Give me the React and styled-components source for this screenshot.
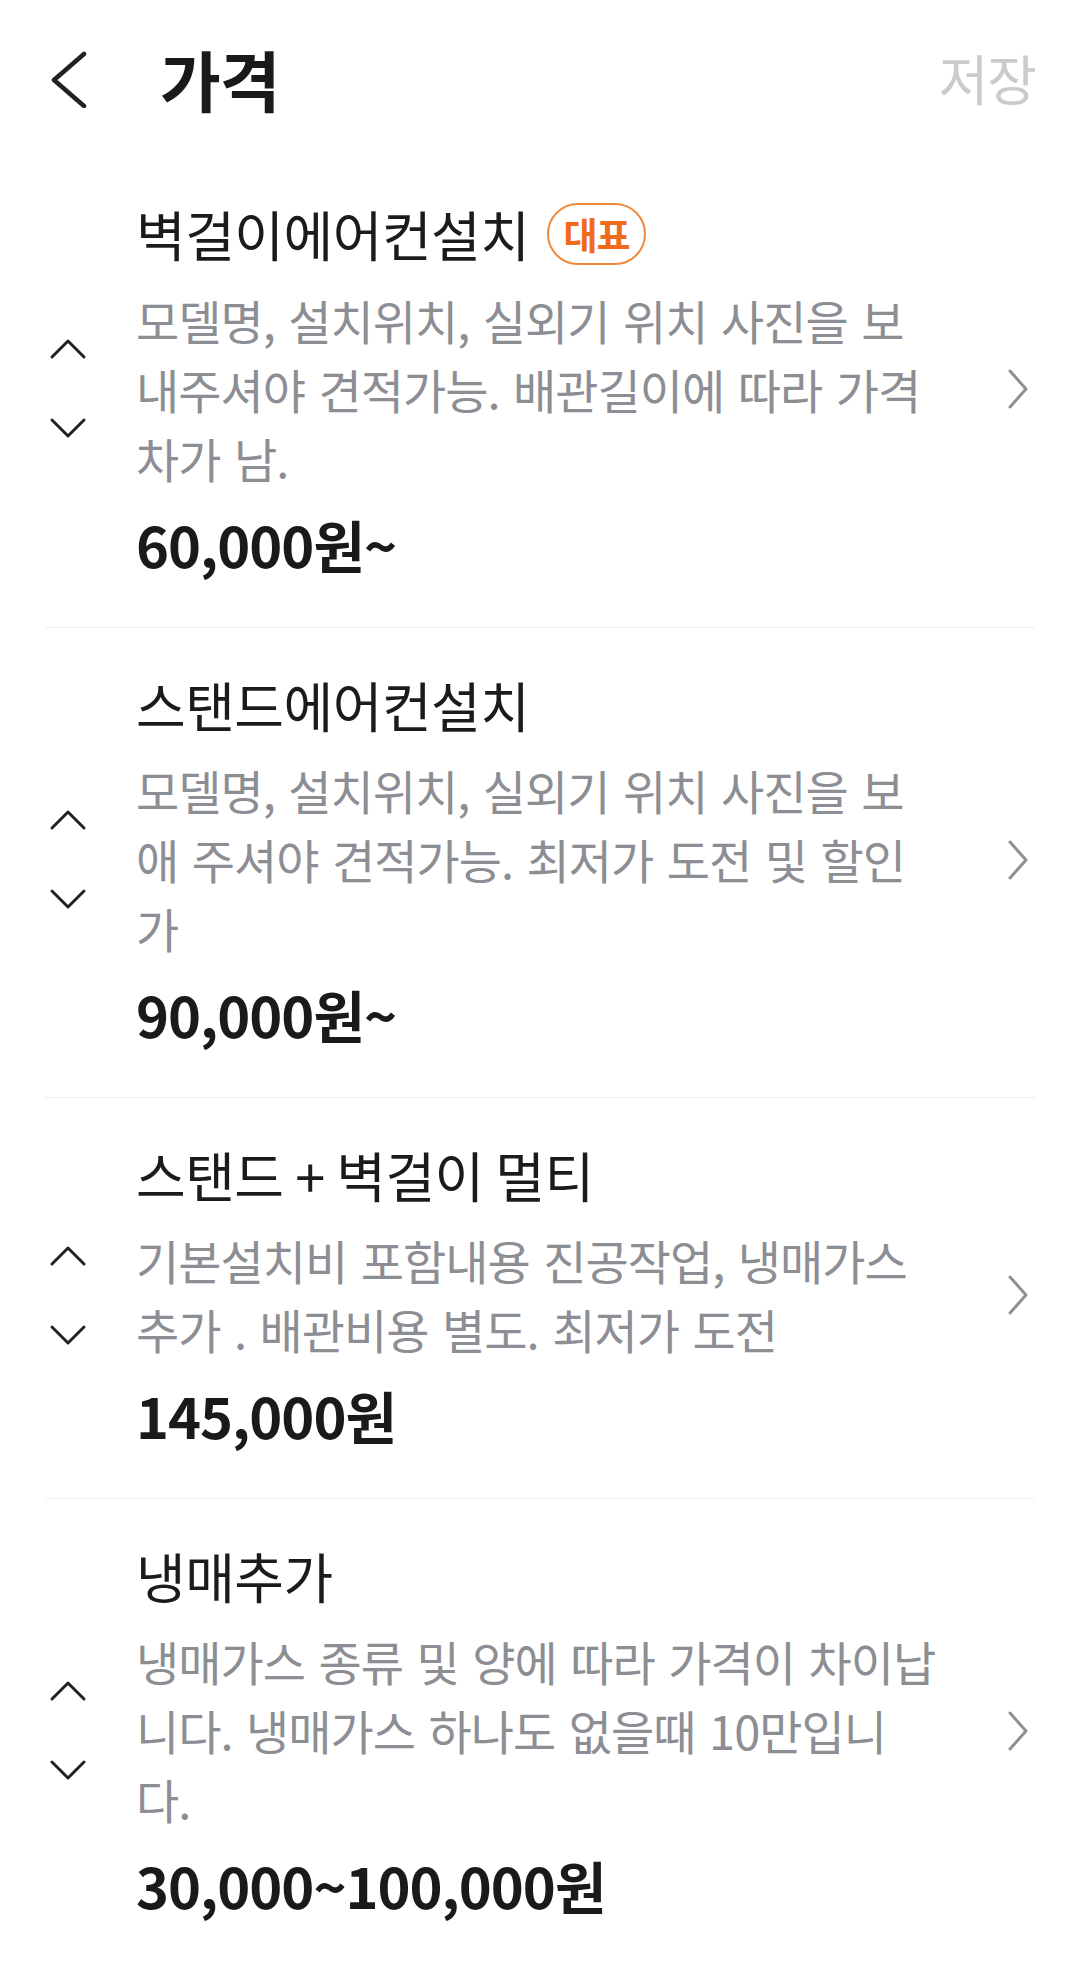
import React from "react";
import styled, { createGlobalStyle } from "styled-components";

const GlobalStyle = createGlobalStyle`
  body {
    margin: 0;
    background: #ffffff;
    font-family: "Noto Sans CJK KR", "Noto Sans", sans-serif;
  }
`;

const items = [
  {
    name: "벽걸이에어컨설치",
    main: true,
    desc: [
      "모델명, 설치위치, 실외기 위치 사진을 보",
      "내주셔야 견적가능. 배관길이에 따라 가격",
      "차가 남.",
    ],
    price: "60,000원~",
  },
  {
    name: "스탠드에어컨설치",
    desc: [
      "모델명, 설치위치, 실외기 위치 사진을 보",
      "애 주셔야 견적가능. 최저가 도전 및 할인",
      "가",
    ],
    price: "90,000원~",
  },
  {
    name: "스탠드 + 벽걸이 멀티",
    desc: ["기본설치비 포함내용 진공작업, 냉매가스", "추가 . 배관비용 별도. 최저가 도전"],
    price: "145,000원",
  },
  {
    name: "냉매추가",
    desc: [
      "냉매가스 종류 및 양에 따라 가격이 차이납",
      "니다. 냉매가스 하나도 없을때 10만입니",
      "다.",
    ],
    price: "30,000~100,000원",
  },
];

const App = () => {
  return (
    <Page>
      <GlobalStyle />
      <Header>
        <BackIcon width="40" height="60" viewBox="0 0 40 60">
          <path d="M36 6 L6 32 L36 58" />
        </BackIcon>
        <Title>가격</Title>
        <SaveBtn>저장</SaveBtn>
      </Header>

      <List>
        {items.map((item, index) => (
          <Item key={index}>
            <Sorter>
              <SmallArrow width="38" height="22" viewBox="0 0 38 22">
                <path d="M3 19 L19 3 L35 19" />
              </SmallArrow>
              <SmallArrow width="38" height="22" viewBox="0 0 38 22">
                <path d="M3 3 L19 19 L35 3" />
              </SmallArrow>
            </Sorter>
            <Body>
              <NameRow>
                <Name>{item.name}</Name>
                {item.main && <Badge>대표</Badge>}
              </NameRow>
              <Desc>
                {item.desc.map((line, i) => (
                  <DescLine key={i}>{line}</DescLine>
                ))}
              </Desc>
              <Price>{item.price}</Price>
            </Body>
            <GoIcon width="26" height="42" viewBox="0 0 26 42">
              <path d="M5 3 L21 21 L5 39" />
            </GoIcon>
          </Item>
        ))}
      </List>
    </Page>
  );
};

const Page = styled.div`
  width: 1080px;
  min-height: 1963px;
  background: #ffffff;
  overflow: hidden;
`;

const Header = styled.div`
  display: flex;
  align-items: center;
  height: 156px;
  padding: 0 44px 0 48px;
`;

const BackIcon = styled.svg`
  flex-shrink: 0;
  fill: none;
  stroke: #222222;
  stroke-width: 4.5;
  stroke-linecap: round;
  stroke-linejoin: round;
`;

const Title = styled.h1`
  margin: 0 0 0 72px;
  font-size: 66px;
  font-weight: 700;
  color: #1a1a1a;
  line-height: 1;
  letter-spacing: -1px;
`;

const SaveBtn = styled.span`
  margin-left: auto;
  font-size: 54px;
  color: #c9cbce;
  line-height: 1;
  letter-spacing: -1px;
`;

const List = styled.div`
  padding: 0 45px;
`;

const Item = styled.div`
  display: flex;
  align-items: center;
  padding: 47px 0 53px;
  border-bottom: 1px solid #efefef;

  &:last-child {
    border-bottom: none;
  }
`;

const Sorter = styled.div`
  width: 45px;
  flex-shrink: 0;
  display: flex;
  flex-direction: column;
  align-items: center;
  gap: 57px;
`;

const SmallArrow = styled.svg`
  fill: none;
  stroke: #222222;
  stroke-width: 3;
  stroke-linecap: round;
  stroke-linejoin: round;
`;

const Body = styled.div`
  flex: 1;
  min-width: 0;
  margin-left: 46px;
  display: flex;
  flex-direction: column;
`;

const NameRow = styled.div`
  display: flex;
  align-items: center;
  min-height: 60px;
`;

const Name = styled.span`
  font-size: 54px;
  line-height: 60px;
  color: #1b1b1b;
  letter-spacing: -0.5px;
`;

const Badge = styled.span`
  margin-left: 18px;
  height: 62px;
  padding: 0 14px;
  box-sizing: border-box;
  display: inline-flex;
  align-items: center;
  border: 2px solid #ef8a3c;
  border-radius: 31px;
  color: #f06a1c;
  font-size: 37px;
  font-weight: 700;
  letter-spacing: -1px;
`;

const Desc = styled.div`
  margin-top: 20px;
`;

const DescLine = styled.div`
  font-size: 47px;
  line-height: 69px;
  color: #8c8e94;
  letter-spacing: -1px;
  word-spacing: 4px;
  white-space: nowrap;
`;

const Price = styled.div`
  margin-top: 22px;
  font-size: 56px;
  line-height: 60px;
  font-weight: 700;
  color: #1a1a1a;
  letter-spacing: -1px;
`;

const GoIcon = styled.svg`
  flex-shrink: 0;
  margin-right: 4px;
  fill: none;
  stroke: #8f9095;
  stroke-width: 3;
  stroke-linecap: round;
  stroke-linejoin: round;
`;

export default App;
